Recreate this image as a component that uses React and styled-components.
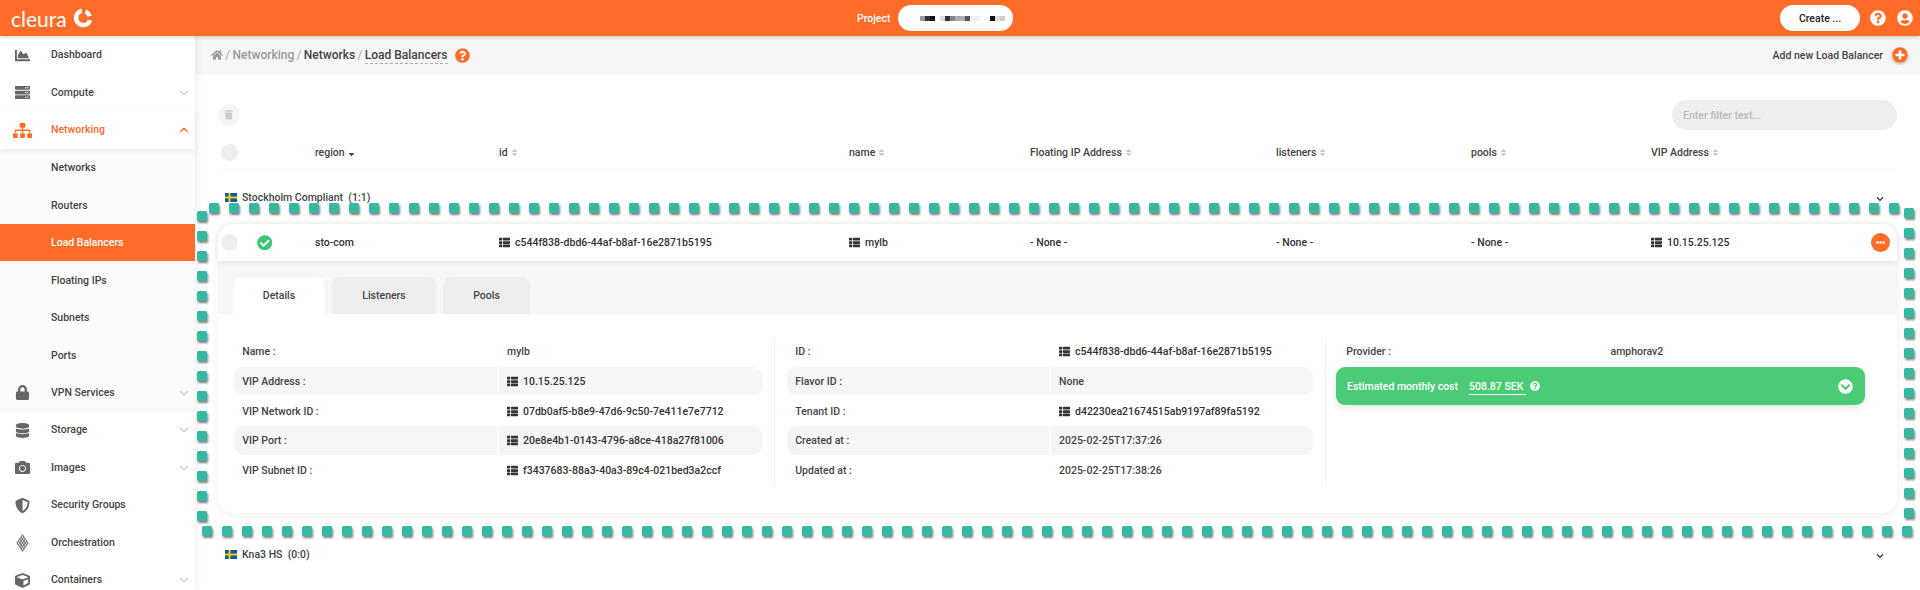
import styled, { createGlobalStyle } from 'styled-components';
import {
  FaChartArea, FaServer, FaSitemap, FaLock, FaDatabase, FaCamera, FaShieldAlt, FaCube,
  FaHome, FaQuestionCircle, FaPlusCircle, FaTrash, FaThList, FaSort, FaSortDown,
  FaCheckCircle, FaEllipsisH, FaChevronCircleDown, FaUserCircle, FaChevronDown,
} from 'react-icons/fa';
import { ChevronDown, ChevronUp } from 'lucide-react';

const ORANGE = '#ff6c27';

const GlobalStyle = createGlobalStyle`
  html, body {
    margin: 0;
    height: 100%;
    overflow: hidden;
    background: #fff;
    font-family: Roboto, "Liberation Sans", sans-serif;
    font-size: 10.5px;
    font-weight: 500;
    color: #444;
  }
  #root { height: 100%; }
`;

const Page = styled.div`
  display: flex;
  flex-direction: column;
  height: 100vh;
  position: relative;
  overflow: hidden;
`;

const TopBar = styled.header`
  flex: 0 0 36px;
  display: flex;
  align-items: center;
  justify-content: space-between;
  background: ${ORANGE};
  box-shadow: 0 1px 4px rgba(0, 0, 0, .2);
  color: #fff;
  position: relative;
  z-index: 3;
`;

const Logo = styled.div`
  display: flex;
  align-items: center;
  gap: 6px;
  padding-left: 11px;
  width: 300px;
`;

const LogoWord = styled.span`
  font-family: Lato, sans-serif;
  font-weight: 400;
  font-size: 21px;
  line-height: 1;
`;

const ProjectBox = styled.div`
  display: flex;
  align-items: center;
  gap: 8px;
  margin-left: 546px;
`;

const ProjectPill = styled.div`
  width: 115px;
  height: 26px;
  border-radius: 13px;
  background: #fff;
  display: flex;
  align-items: center;
  padding-left: 17px;
  box-sizing: border-box;
`;

const Pixel = styled.i`
  width: 5px;
  height: 5px;
  background: ${p => p.$c};
`;

const TopActions = styled.div`
  display: flex;
  align-items: center;
  margin-left: auto;
  padding-right: 7px;
  font-size: 16px;
`;

const CreateButton = styled.div`
  width: 80px;
  height: 26px;
  border-radius: 13px;
  background: #fff;
  color: #222;
  font-size: 10.5px;
  display: flex;
  align-items: center;
  justify-content: center;
  margin-right: 10px;
`;

const TopIcon = styled.span`
  display: flex;
  margin-left: ${p => p.$gap || 0}px;
`;

const Body = styled.div`
  flex: 1;
  display: flex;
  min-height: 0;
`;

const Sidebar = styled.nav`
  flex: 0 0 195px;
  background: #fff;
  box-shadow: 1px 0 7px rgba(0, 0, 0, .08);
  position: relative;
  z-index: 2;
`;

const NavItem = styled.div`
  height: 37.5px;
  display: flex;
  align-items: center;
  line-height: 14px;
  padding-top: 1px;
  box-sizing: border-box;
  color: ${p => (p.$open ? ORANGE : '#444')};
  background: #fff;
  box-shadow: ${p => (p.$open ? '0 2px 6px rgba(0, 0, 0, .07)' : 'none')};
  position: relative;
`;

const NavIcon = styled.span`
  width: 45px;
  margin-right: 6px;
  display: flex;
  justify-content: center;
  color: ${p => (p.$open ? ORANGE : '#666')};
  font-size: ${p => p.$size || 15}px;
`;

const NavChevron = styled.span`
  margin-left: auto;
  margin-right: 4px;
  display: flex;
  color: ${p => (p.$open ? ORANGE : '#999')};
`;

const SubMenu = styled.div`
  background: #fcfcfc;
  box-shadow: inset 0 -6px 6px -6px rgba(0, 0, 0, .05);
`;

const SubItem = styled.div`
  height: 37.5px;
  display: flex;
  align-items: center;
  padding: 1px 0 0 51px;
  box-sizing: border-box;
  color: ${p => (p.$active ? '#fff' : '#444')};
  background: ${p => (p.$active ? ORANGE : 'transparent')};
`;

const VpnItem = styled(NavItem)`
  background: transparent;
`;

const Main = styled.main`
  flex: 1;
  min-width: 0;
  display: flex;
  flex-direction: column;
`;

const TitleBar = styled.div`
  flex: 0 0 38px;
  display: flex;
  align-items: center;
  background: #f6f6f6;
  padding: 0 12px 0 16px;
`;

const Crumbs = styled.div`
  display: flex;
  align-items: center;
  gap: 2.3px;
  font-size: 12px;
  color: #999;
`;

const CrumbSep = styled.span`
  color: #aaa;
  font-weight: 400;
`;

const CrumbDark = styled.span`
  color: #444;
`;

const CrumbCurrent = styled(CrumbDark)`
  border-bottom: 1px dashed #aaa;
  padding-bottom: 1px;
  margin-top: 2px;
`;

const HelpDot = styled.span`
  display: flex;
  color: ${ORANGE};
  font-size: 15px;
  margin-left: 5px;
`;

const AddNew = styled.div`
  margin-left: auto;
  display: flex;
  align-items: center;
  gap: 9px;
  color: #444;
`;

const AddIcon = styled.span`
  display: flex;
  color: ${ORANGE};
  font-size: 16px;
  background: #fff;
  border-radius: 50%;
  box-shadow: 0 1px 3px rgba(0, 0, 0, .3);
`;

const Content = styled.div`
  padding: 0 23px;
`;

const Toolbar = styled.div`
  display: flex;
  align-items: center;
  justify-content: space-between;
  height: 30px;
  margin: 26px 0 6px;
`;

const TrashButton = styled.span`
  width: 22px;
  height: 22px;
  border-radius: 50%;
  background: #f6f6f6;
  color: #ccc;
  font-size: 9.5px;
  display: flex;
  align-items: center;
  justify-content: center;
`;

const FilterInput = styled.div`
  width: 225px;
  height: 30px;
  border-radius: 15px;
  background: #eee;
  color: #bbb;
  display: flex;
  align-items: center;
  padding-left: 11px;
  box-sizing: border-box;
`;

const COLUMNS = '97px 184px 350px 181px 246px 195px 180px 1fr';

const HeadRow = styled.div`
  display: grid;
  grid-template-columns: ${COLUMNS};
  align-items: center;
  height: 34px;
  border-bottom: 1px solid #f7f7f7;
  box-sizing: border-box;
  color: #444;
`;

const HeadCell = styled.div`
  display: flex;
  align-items: center;
  gap: 2px;
`;

const SortMark = styled.span`
  display: flex;
  font-size: 9px;
  color: ${p => (p.$on ? '#444' : '#ccc')};
`;

const Bullet = styled.span`
  width: 17px;
  height: 17px;
  border-radius: 50%;
  background: #eee;
  margin-left: 3px;
`;

const GroupTitle = styled.div`
  height: 54px;
  display: flex;
  align-items: center;
  gap: 5px;
  padding-left: 7px;
  margin-top: ${p => p.$gap || 0}px;
  color: #444;
`;

const GroupChevron = styled.span`
  margin-left: auto;
  margin-right: 13px;
  margin-top: 3px;
  display: flex;
  font-size: 8px;
  color: #333;
`;

const Card = styled.section`
  border-radius: 15px;
  box-shadow: 0 2px 8px rgba(0, 0, 0, .06);
`;

const RowTop = styled.div`
  display: grid;
  grid-template-columns: ${COLUMNS};
  align-items: center;
  height: 37px;
  background: #fff;
  border-radius: 15px 15px 0 0;
  box-shadow: 0 2px 6px rgba(0, 0, 0, .07), 0 -3px 8px rgba(0, 0, 0, .025);
  color: #333;
  position: relative;
`;

const StatusCell = styled.div`
  display: flex;
  align-items: center;
  gap: 19px;
`;

const StatusIcon = styled.span`
  display: flex;
  color: #3ec672;
  font-size: 15.5px;
`;

const IdValue = styled.span`
  display: flex;
  align-items: center;
  gap: 5px;
  color: #333;
`;

const IdIcon = styled.span`
  display: flex;
  font-size: 11px;
  color: #333;
`;

const VipCell = styled.div`
  display: flex;
  align-items: center;
  justify-content: space-between;
  padding-right: 7px;
`;

const MoreButton = styled.span`
  width: 19px;
  height: 19px;
  border-radius: 50%;
  background: ${ORANGE};
  color: #fff;
  font-size: 9px;
  display: flex;
  align-items: center;
  justify-content: center;
`;

const TabStrip = styled.div`
  display: flex;
  gap: 7px;
  height: 53px;
  box-sizing: border-box;
  padding: 16px 0 0 15px;
  background: #f6f6f6;
`;

const Tab = styled.div`
  width: ${p => p.$w}px;
  border-radius: 8px 8px 0 0;
  background: ${p => (p.$active ? '#fff' : '#eee')};
  color: #444;
  display: flex;
  align-items: center;
  justify-content: center;
`;

const DetailPanel = styled.div`
  display: grid;
  grid-template-columns: 556px 551px 1fr;
  background: #fff;
  border-radius: 0 0 15px 15px;
  padding: 23px 0 26px;
`;

const DetailColumn = styled.div`
  height: 150px;
  display: flex;
  flex-direction: column;
  gap: 1.2px;
  padding: ${p => p.$pad};
  border-left: ${p => (p.$line ? '1px solid #f2f2f2' : 'none')};
`;

const KvRow = styled.div`
  display: grid;
  grid-template-columns: 1fr 1fr;
  gap: 1.5px;
  height: 28.5px;
  flex: 0 0 28.5px;
  margin-left: ${p => p.$inset || 0}px;

  &:nth-child(even) > div {
    background: #f6f6f6;
  }
`;

const KvCell = styled.div`
  display: flex;
  align-items: center;
  padding: 1px 0 0 8.25px;
  box-sizing: border-box;
  color: #444;

  &:first-child {
    border-radius: 9px 0 0 9px;
  }
  &:last-child {
    border-radius: 0 9px 9px 0;
  }
`;

const CostBar = styled.div`
  height: 38px;
  flex: 0 0 38px;
  margin-top: 0.5px;
  display: flex;
  align-items: center;
  padding: 0 12px 0 11px;
  border-radius: 9px;
  background: #4bcb76;
  color: #fff;
  box-shadow: 0 3px 7px rgba(0, 0, 0, .1);
`;

const CostValue = styled.span`
  border-bottom: 1px solid #fff;
  padding: 0 3px 1px 0;
  margin-left: 11px;
  margin-top: 2px;
`;

const CostHelp = styled.span`
  display: flex;
  font-size: 10px;
  margin-left: 4px;
`;

const CostToggle = styled.span`
  display: flex;
  font-size: 15px;
  margin-left: auto;
`;

const OverlaySvg = styled.svg`
  position: absolute;
  inset: 0;
  width: 100%;
  height: 100%;
  pointer-events: none;
  z-index: 5;
  filter: drop-shadow(1.5px 2px 1px rgba(0, 0, 0, .5));
`;

const range = (from, to) => {
  const out = [];
  for (let v = from; v <= to; v += 20) out.push(v);
  return out;
};

// the dotted selection frame drawn over the screenshot
const squares = [
  ...range(209, 1889).map(x => [x, 203]),
  ...range(211, 511).map(y => [197, y]),
  ...range(202, 1902).map(x => [x, 526]),
  ...range(208, 508).map(y => [1904, y]),
];

const pixels = [
  '#fff', '#999', '#333', '#111', '#fff', '#ddd', '#333', '#888', '#aaa', '#aaa', '#555', '#eee', '#f0f0f0',
  '#fff', '#fff', '#111', '#ddd', '#ccc',
];

const Flag = () => (
  <svg width="12" height="9" viewBox="0 0 12 9">
    <rect width="12" height="9" fill="#0b5aa5" />
    <rect x="3.5" width="2" height="9" fill="#fcc916" />
    <rect y="3.5" width="12" height="2" fill="#fcc916" />
  </svg>
);

const OrchestrationIcon = () => (
  <svg width="13" height="18" viewBox="0 0 13 18" fill="none" stroke="#777" strokeWidth="1.1">
    <path d="M6.500 1 12 9l-5.500 8L1 9z" />
    <path d="M3.800 5 9.300 13M2.400 7l5.500 8M5.200 3l5.500 8M9.200 5 3.700 13M10.600 7l-5.500 8M7.800 3 2.300 11" />
  </svg>
);

const CleuraMark = () => (
  <svg width="20" height="20" viewBox="0 0 19 19" fill="none" stroke="#fff" strokeWidth="4.400">
    <path d="M8.500 2.700A6.800 6.800 0 1 0 16.200 11.500" />
    <path d="M11.800 3.300A6.800 6.800 0 0 1 15.800 7.800" strokeWidth="4" />
  </svg>
);

const Sort = ({ on }) => (
  <SortMark $on={on}>{on ? <FaSortDown /> : <FaSort />}</SortMark>
);

const Id = ({ children }) => (
  <IdValue><IdIcon><FaThList /></IdIcon>{children}</IdValue>
);

const Kv = ({ label, children, inset }) => (
  <KvRow $inset={inset}>
    <KvCell>{label}</KvCell>
    <KvCell>{children}</KvCell>
  </KvRow>
);

const Chevron = ({ open }) => (
  <NavChevron $open={open}>
    {open ? <ChevronUp size={14} /> : <ChevronDown size={14} strokeWidth={1.5} />}
  </NavChevron>
);

const App = () => (
  <Page>
    <GlobalStyle />
    <TopBar>
      <Logo>
        <LogoWord>cleura</LogoWord>
        <CleuraMark />
      </Logo>
      <ProjectBox>
        Project
        <ProjectPill>
          {pixels.map((c, i) => <Pixel key={i} $c={c} />)}
        </ProjectPill>
      </ProjectBox>
      <TopActions>
        <CreateButton>Create ...</CreateButton>
        <TopIcon><FaQuestionCircle /></TopIcon>
        <TopIcon $gap={11}><FaUserCircle /></TopIcon>
      </TopActions>
    </TopBar>
    <Body>
      <Sidebar>
        <NavItem><NavIcon><FaChartArea /></NavIcon>Dashboard</NavItem>
        <NavItem><NavIcon><FaServer /></NavIcon>Compute<Chevron /></NavItem>
        <NavItem $open><NavIcon $open $size={19}><FaSitemap /></NavIcon>Networking<Chevron open /></NavItem>
        <SubMenu>
          <SubItem>Networks</SubItem>
          <SubItem>Routers</SubItem>
          <SubItem $active>Load Balancers</SubItem>
          <SubItem>Floating IPs</SubItem>
          <SubItem>Subnets</SubItem>
          <SubItem>Ports</SubItem>
          <VpnItem><NavIcon><FaLock /></NavIcon>VPN Services<Chevron /></VpnItem>
        </SubMenu>
        <NavItem><NavIcon><FaDatabase /></NavIcon>Storage<Chevron /></NavItem>
        <NavItem><NavIcon><FaCamera /></NavIcon>Images<Chevron /></NavItem>
        <NavItem><NavIcon><FaShieldAlt /></NavIcon>Security Groups</NavItem>
        <NavItem><NavIcon><OrchestrationIcon /></NavIcon>Orchestration</NavItem>
        <NavItem><NavIcon><FaCube /></NavIcon>Containers<Chevron /></NavItem>
      </Sidebar>
      <Main>
        <TitleBar>
          <Crumbs>
            <FaHome />
            <CrumbSep>/</CrumbSep>
            Networking
            <CrumbSep>/</CrumbSep>
            <CrumbDark>Networks</CrumbDark>
            <CrumbSep>/</CrumbSep>
            <CrumbCurrent>Load Balancers</CrumbCurrent>
            <HelpDot><FaQuestionCircle /></HelpDot>
          </Crumbs>
          <AddNew>
            Add new Load Balancer
            <AddIcon><FaPlusCircle /></AddIcon>
          </AddNew>
        </TitleBar>
        <Content>
          <Toolbar>
            <TrashButton><FaTrash /></TrashButton>
            <FilterInput>Enter filter text...</FilterInput>
          </Toolbar>
          <HeadRow>
            <Bullet />
            <HeadCell>region <Sort on /></HeadCell>
            <HeadCell>id <Sort /></HeadCell>
            <HeadCell>name <Sort /></HeadCell>
            <HeadCell>Floating IP Address <Sort /></HeadCell>
            <HeadCell>listeners <Sort /></HeadCell>
            <HeadCell>pools <Sort /></HeadCell>
            <HeadCell>VIP Address <Sort /></HeadCell>
          </HeadRow>
          <GroupTitle>
            <Flag />
            Stockholm Compliant&nbsp;&nbsp;(1:1)
            <GroupChevron><FaChevronDown /></GroupChevron>
          </GroupTitle>
          <Card>
            <RowTop>
              <StatusCell><Bullet /><StatusIcon><FaCheckCircle /></StatusIcon></StatusCell>
              <div>sto-com</div>
              <Id>c544f838-dbd6-44af-b8af-16e2871b5195</Id>
              <Id>mylb</Id>
              <div>- None -</div>
              <div>- None -</div>
              <div>- None -</div>
              <VipCell>
                <Id>10.15.25.125</Id>
                <MoreButton><FaEllipsisH /></MoreButton>
              </VipCell>
            </RowTop>
            <TabStrip>
              <Tab $active $w={92}>Details</Tab>
              <Tab $w={104}>Listeners</Tab>
              <Tab $w={87}>Pools</Tab>
            </TabStrip>
            <DetailPanel>
              <DetailColumn $pad="0 12px 0 16px">
                <Kv label="Name :">mylb</Kv>
                <Kv label="VIP Address :"><Id>10.15.25.125</Id></Kv>
                <Kv label="VIP Network ID :"><Id>07db0af5-b8e9-47d6-9c50-7e411e7e7712</Id></Kv>
                <Kv label="VIP Port :"><Id>20e8e4b1-0143-4796-a8ce-418a27f81006</Id></Kv>
                <Kv label="VIP Subnet ID :"><Id>f3437683-88a3-40a3-89c4-021bed3a2ccf</Id></Kv>
              </DetailColumn>
              <DetailColumn $line $pad="0 12px">
                <Kv label="ID :"><Id>c544f838-dbd6-44af-b8af-16e2871b5195</Id></Kv>
                <Kv label="Flavor ID :">None</Kv>
                <Kv label="Tenant ID :"><Id>d42230ea21674515ab9197af89fa5192</Id></Kv>
                <Kv label="Created at :">2025-02-25T17:37:26</Kv>
                <Kv label="Updated at :">2025-02-25T17:38:26</Kv>
              </DetailColumn>
              <DetailColumn $line $pad="0 32px 0 10px">
                <Kv label="Provider :" inset={2}>amphorav2</Kv>
                <CostBar>
                  Estimated monthly cost
                  <CostValue>508.87 SEK</CostValue>
                  <CostHelp><FaQuestionCircle /></CostHelp>
                  <CostToggle><FaChevronCircleDown /></CostToggle>
                </CostBar>
              </DetailColumn>
            </DetailPanel>
          </Card>
          <GroupTitle $gap={14}>
            <Flag />
            Kna3 HS&nbsp;&nbsp;(0:0)
            <GroupChevron><FaChevronDown /></GroupChevron>
          </GroupTitle>
        </Content>
      </Main>
    </Body>
    <OverlaySvg viewBox="0 0 1920 590">
      {squares.map(([x, y]) => (
        <rect key={`${x}-${y}`} x={x} y={y} width="10" height="10" rx="1.5" fill="#36b9a0" />
      ))}
    </OverlaySvg>
  </Page>
);

export default App;
